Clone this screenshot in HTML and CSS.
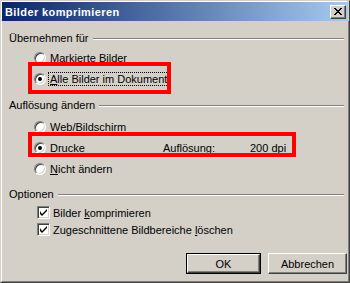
FILE: index.html
```html
<!DOCTYPE html>
<html>
<head>
<meta charset="utf-8">
<link rel="stylesheet" href="styles.css">
</head>
<body>
<div class="window">
  <div class="titlebar">
    <span class="title">Bilder komprimieren</span>
    <span class="close"><svg width="8" height="7" viewBox="0 0 8 7"><path d="M0 0h2v1h1v1h2v-1h1v-1h2v1h-1v1h-1v1h-1v1h1v1h1v1h1v1h-2v-1h-1v-1h-2v1h-1v1h-2v-1h1v-1h1v-1h1v-1h-1v-1h-1v-1h-1z" fill="#000"/></svg></span>
  </div>
  <div class="body">
    <div class="group g1">
      <div class="glabel"><span>Übernehmen für</span><i class="line"></i></div>
      <div class="row r1"><span class="radio"></span><span><u>M</u>arkierte Bilder</span></div>
      <div class="row r2"><span class="radio on"></span><span class="focus"><u>A</u>lle Bilder im Dokument</span><span class="mark m1"></span></div>
    </div>
    <div class="group g2">
      <div class="glabel"><span>Auflösung ändern</span><i class="line"></i></div>
      <div class="row"><span class="radio"></span><span><u>W</u>eb/Bildschirm</span></div>
      <div class="row"><span class="radio on"></span><span class="drk"><u>D</u>rucke</span><span class="res">Auflösung:</span><span>200 dpi</span><span class="mark m2"></span></div>
      <div class="row"><span class="radio"></span><span><u>N</u>icht ändern</span></div>
    </div>
    <div class="group g3">
      <div class="glabel"><span>Optionen</span><i class="line"></i></div>
      <div class="crow"><span class="check"><svg width="7" height="7" viewBox="0 0 7 7"><path d="M0 2v3l2 2 5-5v-2l-5 5z" fill="#000"/></svg></span><span>Bilder <u>k</u>omprimieren</span></div>
      <div class="crow"><span class="check"><svg width="7" height="7" viewBox="0 0 7 7"><path d="M0 2v3l2 2 5-5v-2l-5 5z" fill="#000"/></svg></span><span>Zugeschnittene Bildbereiche <u>l</u>öschen</span></div>
    </div>
    <div class="buttons">
      <span class="btn def"><span class="bi">OK</span></span>
      <span class="btn cancel"><span class="bi">Abbrechen</span></span>
    </div>
  </div>
</div>
</body>
</html>
```
FILE: styles.css
```css
* { box-sizing: border-box; }
html, body { margin: 0; padding: 0; }
body { width: 350px; height: 283px; overflow: hidden; background: #d4d0c8; font-family: "Liberation Sans", Arial, sans-serif; font-size: 11px; color: #000; }
.window {
  width: 350px; height: 283px;
  border: 1px solid; border-color: #d4d0c8 #404040 #404040 #d4d0c8;
  background: #d4d0c8;
  display: flex; flex-direction: column;
}
.titlebar {
  margin: 1px 1px 0 1px;
  height: 19px;
  background: linear-gradient(to right, #0a246a, #a6caf0);
  display: flex; align-items: center; justify-content: space-between;
  padding: 0 2px 0 3px;
  box-shadow: -1px -1px 0 #fff;
}
.title { color: #fff; font-weight: bold; font-size: 11px; letter-spacing: 0.4px; }
.close {
  width: 16px; height: 14px; background: #d4d0c8;
  border: 1px solid; border-color: #fff #404040 #404040 #fff;
  box-shadow: inset -1px -1px 0 #808080;
  display: flex; align-items: center; justify-content: center; padding-right: 1px;
}
.close svg { display: block; }
.body {
  flex: 1;
  border-left: 1px solid #fff; border-right: 1px solid #808080; border-bottom: 1px solid #808080;
  padding: 10px 4px 0 7px;
  display: flex; flex-direction: column;
}
.glabel { height: 14px; display: flex; align-items: center; gap: 4px; }
.glabel .line { flex: 1; height: 2px; border-top: 1px solid #808080; border-bottom: 1px solid #fff; margin-top: 1px; }
.row { position: relative; height: 21px; display: flex; align-items: center; padding-left: 25px; }
.g1 .r1 { margin-top: 2px; }
.g2 { margin-top: 9px; }
.g2 .glabel { margin-bottom: 4px; }
.g3 { margin-top: 8px; }
.g3 .glabel { margin-bottom: 3px; }
.radio {
  width: 12px; height: 12px; border-radius: 50%; background: #fff; flex: none;
  border: 1px solid; border-color: #808080 #fff #fff #808080;
  box-shadow: inset 1px 1px 0 #404040, inset -1px -1px 0 #d4d0c8;
  margin-right: 4px; position: relative;
}
.radio.on::after { content: ""; position: absolute; left: 3px; top: 3px; width: 4px; height: 4px; border-radius: 50%; background: #000; }
.focus { outline: 1px dotted #000; outline-offset: 0; padding: 0 1px; margin-left: -1px; }
.mark { position: absolute; border: 4px solid #ff0000; pointer-events: none; }
.m1 { left: 19px; top: -6px; width: 143px; height: 32px; }
.m2 { left: 19px; top: -5px; width: 268px; height: 25px; }
.drk { width: 113px; }
.res { width: 87px; }
.crow { height: 17px; display: flex; align-items: center; padding-left: 28px; }
.check {
  width: 13px; height: 13px; background: #fff; flex: none;
  border: 1px solid; border-color: #808080 #fff #fff #808080;
  box-shadow: inset 1px 1px 0 #404040, inset -1px -1px 0 #d4d0c8;
  margin-right: 3px; display: flex; align-items: center; justify-content: center;
}
.check svg { display: block; }
.buttons { margin-top: 15px; display: flex; justify-content: flex-end; gap: 7px; margin-right: -3px; }
.btn { height: 21px; display: flex; background: #d4d0c8; }
.btn .bi { flex: 1; display: flex; align-items: center; justify-content: center; border: 1px solid; border-color: #fff #404040 #404040 #fff; box-shadow: inset -1px -1px 0 #808080; }
.def { width: 75px; border: 1px solid #000; }
.cancel { width: 79px; }
u { text-decoration: underline; text-underline-offset: 1px; }
```
